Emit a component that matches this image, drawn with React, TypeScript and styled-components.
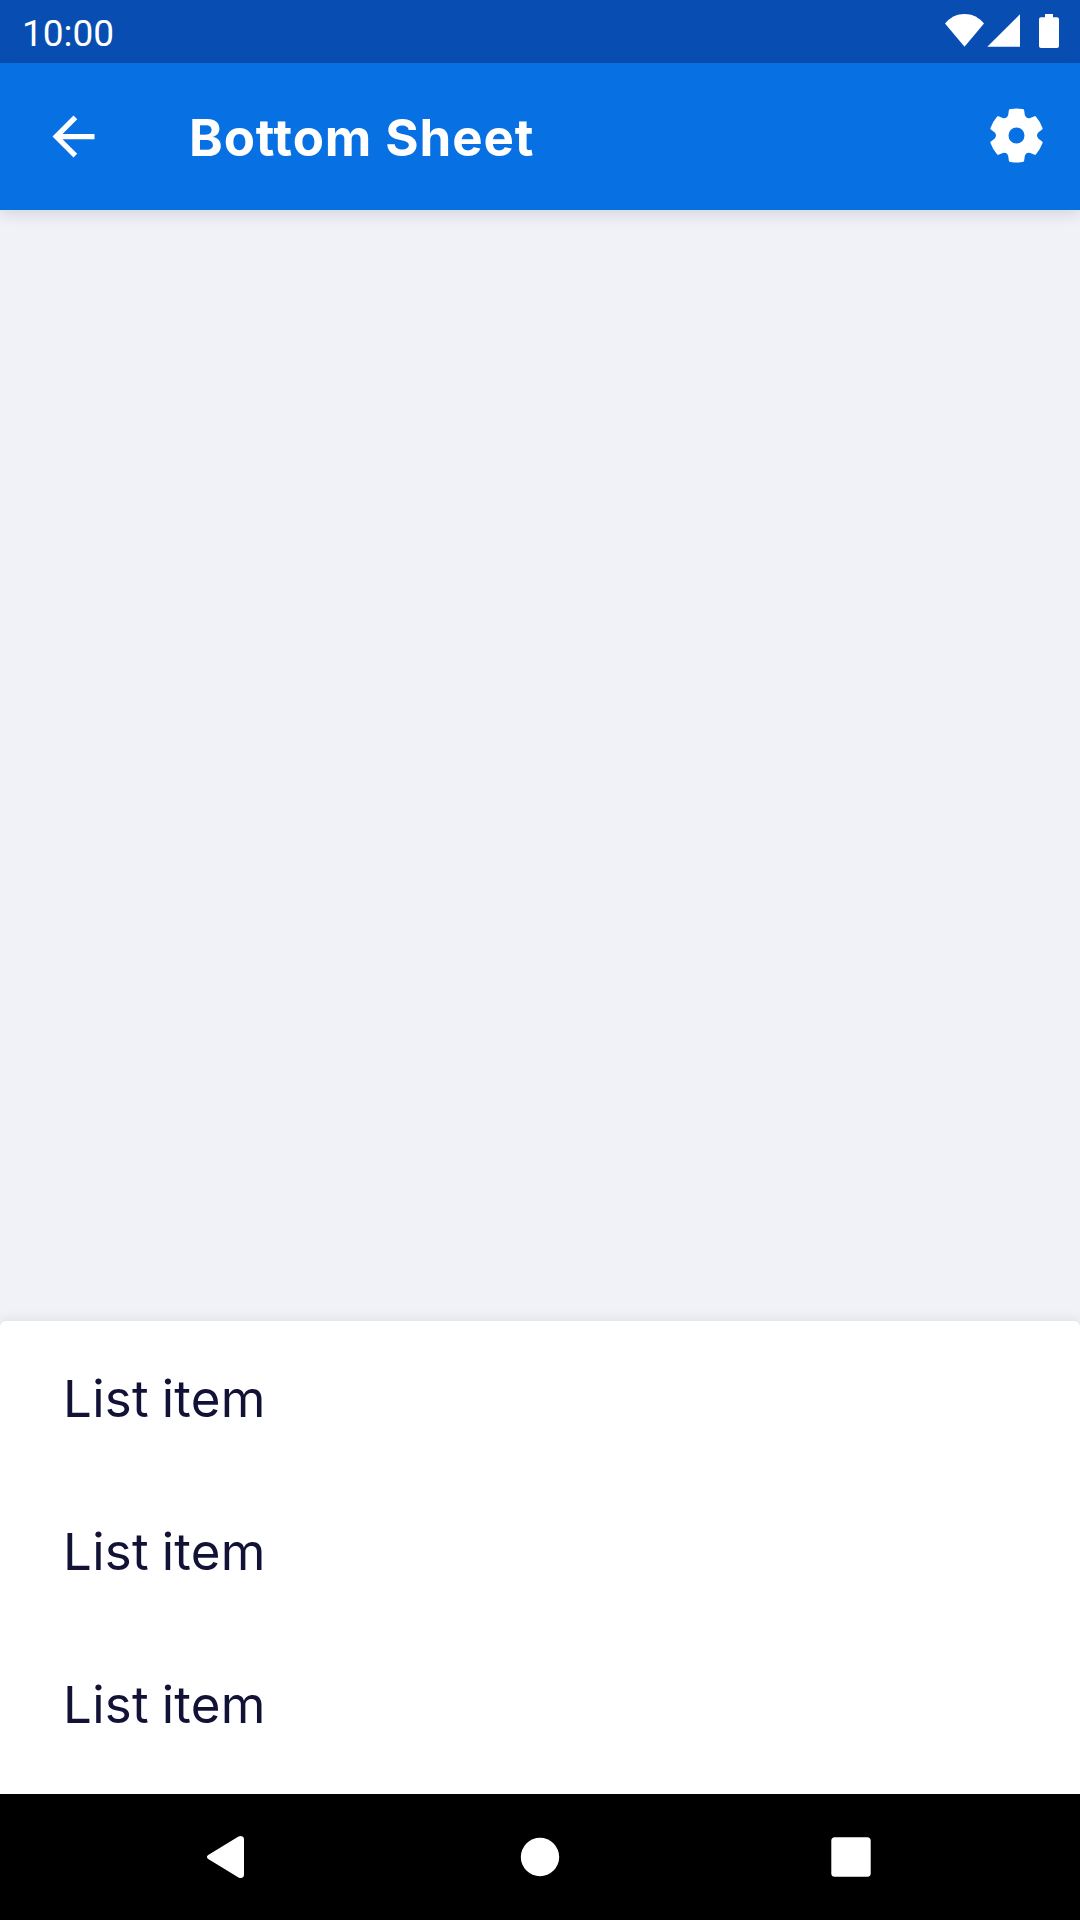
import React from 'react';
import styled, { createGlobalStyle } from 'styled-components';

const GlobalStyle = createGlobalStyle`
  html, body { margin: 0; padding: 0; }
  body { background: #f1f2f8; }
  *, *::before, *::after { box-sizing: border-box; }
`;

const Screen = styled.div`
  display: flex;
  flex-direction: column;
  width: 1080px;
  height: 1920px;
  overflow: hidden;
  background: #f1f2f8;
  font-family: Inter, 'Liberation Sans', sans-serif;
`;

const StatusBar = styled.div`
  display: flex;
  align-items: flex-start;
  justify-content: space-between;
  flex: none;
  height: 63px;
  padding: 3px 21px 0 22px;
  background: #084eb2;
  color: #fff;
`;

const Clock = styled.span`
  padding-top: 1px;
  font: 400 37px/59px Roboto, sans-serif;
`;

const StatusIcons = styled.svg`
  display: block;
  width: 114px;
  height: 60px;
`;

const Toolbar = styled.header`
  display: flex;
  align-items: center;
  flex: none;
  height: 147px;
  padding: 0 27px 0 42px;
  background: #0770e3;
  color: #fff;
  box-shadow: 0 5px 14px rgba(0, 0, 0, 0.11);
`;

const IconButton = styled.button<{ $size: number }>`
  display: flex;
  flex: none;
  width: ${(p) => p.$size}px;
  height: ${(p) => p.$size}px;
  padding: 0;
  border: 0;
  background: none;
  color: inherit;

  svg {
    width: 100%;
    height: 100%;
    fill: currentColor;
  }
`;

const Title = styled.h1`
  flex: 1;
  margin: 0 0 0 84px;
  padding-top: 2px;
  font-size: 51px;
  font-weight: 650;
  line-height: 62px;
  letter-spacing: 0.9px;
  white-space: nowrap;
`;

const Content = styled.main`
  flex: 1;
`;

const Sheet = styled.section`
  flex: none;
  height: 473px;
  padding-bottom: 14px;
  border-radius: 6px 6px 0 0;
  background: #fff;
  box-shadow: 0 0 14px rgba(0, 0, 0, 0.1);
`;

const List = styled.ul`
  margin: 0;
  padding: 0;
  list-style: none;
`;

const ListItem = styled.li`
  display: flex;
  align-items: center;
  height: 153px;
  padding: 2px 63px 0;
  color: #111236;
  font-size: 51px;
  font-weight: 400;
  line-height: 62px;
  letter-spacing: 0.3px;
  word-spacing: -2px;
`;

const NavBar = styled.nav`
  display: grid;
  grid-template-columns: repeat(3, 311px);
  justify-content: center;
  align-items: center;
  justify-items: center;
  flex: none;
  height: 126px;
  background: #000;
  color: #fff;
`;

type Point = [number, number];

const rotate = ([x, y]: Point, turn: number) => {
  const a = (turn * Math.PI) / 3;
  const px = x * Math.cos(a) - y * Math.sin(a);
  const py = x * Math.sin(a) + y * Math.cos(a);
  return `${px.toFixed(2)} ${py.toFixed(2)}`;
};

// One notch of the cog, repeated six times around the hub.
const notch = (turn: number) => {
  const p = (x: number, y: number) => rotate([x, y], turn);
  return [
    `${turn === 0 ? 'M' : 'A90 90 0 0 1 '}${p(77, -25)}`,
    `Q${p(80, -21)} ${p(77, -18)}`,
    `L${p(66, -9.5)}`,
    `Q${p(57, 0)} ${p(66, 9.5)}`,
    `L${p(77, 18)}`,
    `Q${p(80, 21)} ${p(77, 25)}`,
  ].join('');
};

const cogPath =
  [0, 1, 2, 3, 4, 5].map(notch).join('') +
  `A90 90 0 0 1 ${rotate([77, -25], 0)}Z` +
  'M24 0A24 24 0 1 0 -24 0A24 24 0 1 0 24 0Z';

const items = ['List item', 'List item', 'List item'];

export default function App() {
  return (
    <>
      <GlobalStyle />
      <Screen>
        <StatusBar>
          <Clock>10:00</Clock>
          <StatusIcons viewBox="945 3 114 60" fill="#fff">
            <path d="M945 23.5C950.5 17 957 14 964.5 14S978.5 17 984 23.5L964.5 46.8Z" />
            <path d="M987.3 46.8H1020V14.2Z" />
            <path d="M1045 14h8v3.3h4a2 2 0 0 1 2 2V46a2 2 0 0 1-2 2h-16a2 2 0 0 1-2-2V19.300a2 2 0 0 1 2-2h4Z" />
          </StatusIcons>
        </StatusBar>
        <Toolbar>
          <IconButton $size={63} aria-label="Back">
            <svg viewBox="0 0 24 24">
              <path d="M20 11H7.83l5.59-5.59L12 4l-8 8 8 8 1.41-1.41L7.83 13H20v-2z" />
            </svg>
          </IconButton>
          <Title>Bottom Sheet</Title>
          <IconButton $size={73} aria-label="Settings">
            <svg viewBox="-109.500 -106.500 219 219" fillRule="evenodd">
              <path d={cogPath} />
            </svg>
          </IconButton>
        </Toolbar>
        <Content />
        <Sheet>
          <List>
            {items.map((label, index) => (
              <ListItem key={index}>{label}</ListItem>
            ))}
          </List>
        </Sheet>
        <NavBar>
          <IconButton $size={44} aria-label="Back">
            <svg viewBox="207 1835 44 44">
              <path d="M208.200 1855L238.500 1836.600Q240.500 1835.500 242.500 1836.600Q244 1837.300 244 1839V1875Q244 1876.700 242.500 1877.400Q240.500 1878.500 238.500 1877.400L208.200 1859Q205.600 1857 208.200 1855Z" />
            </svg>
          </IconButton>
          <IconButton $size={40} aria-label="Home">
            <svg viewBox="0 0 40 40">
              <circle cx="20" cy="20" r="19.200" />
            </svg>
          </IconButton>
          <IconButton $size={40} aria-label="Recent apps">
            <svg viewBox="0 0 40 40">
              <rect x=".3" y=".3" width="39.400" height="39.400" rx="3.500" />
            </svg>
          </IconButton>
        </NavBar>
      </Screen>
    </>
  );
}
